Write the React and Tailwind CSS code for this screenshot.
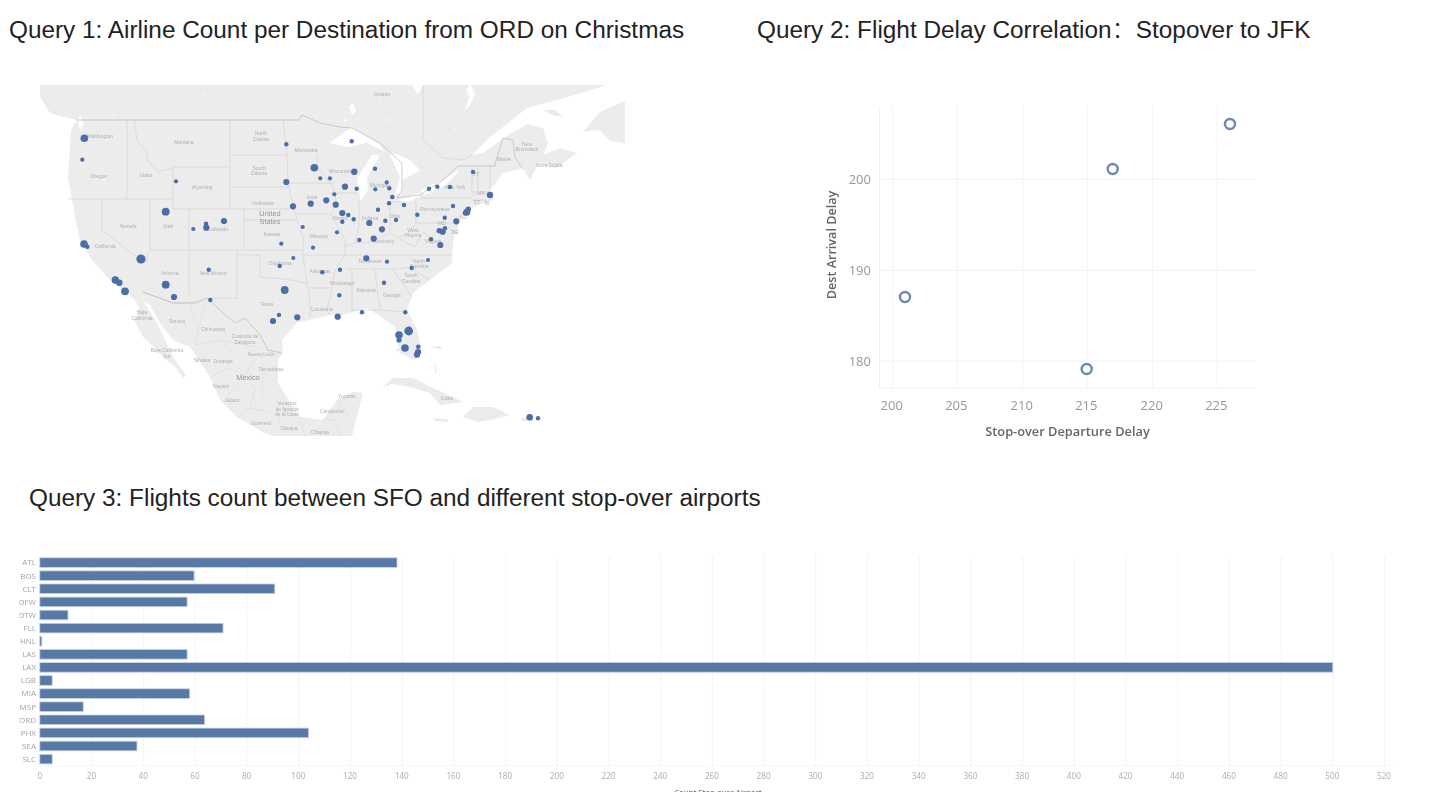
const FONT = { fontFamily: '"Liberation Sans", "Noto Sans CJK SC", sans-serif' };

const LAND = "M40,85 L40,97 L50,113 L60,116 L77,120 L71,130 L68,177 L72,200 L76,222 L80,240 L92,260 L110,280 L127,293 L135,300 L140,310 L134,320 L143,337 L153,346 L163,357 L176,368 L183,378 L186,375 L173,357 L165,340 L157,323 L149,310 L143,300 L150,305 L160,323 L173,340 L190,347 L200,362 L210,377 L220,400 L237,417 L263,432 L272,436 L352,436 L356,420 L363,393 L353,392 L337,400 L330,410 L323,420 L300,417 L290,402 L278,383 L278,360 L283,353 L282,340 L297,323 L317,318 L330,315 L343,315 L367,308 L383,318 L395,327 L400,353 L413,360 L422,353 L417,330 L407,310 L413,293 L430,280 L452,263 L453,243 L457,227 L463,213 L476,206 L493,200 L490,190 L503,173 L523,168 L530,180 L538,164 L556,168 L577,153 L560,148 L543,155 L548,143 L543,128 L528,124 L513,132 L497,143 L483,153 L472,155 L490,137 L503,127 L527,108 L557,100 L585,92 L607,85 L423,85 L418,95 L412,85 Z";
const NEWFOUNDLAND = "M583,132 L600,112 L622,102 L625,102 L625,143 L610,141 L600,130 Z";
const ISLANDS = [
  "M383,387 L393,378 L413,378 L433,388 L463,402 L440,405 L430,393 L410,387 L392,384 Z",
  "M433,418 L448,419 L448,422 L436,421 Z",
  "M463,417 L473,407 L493,407 L510,415 L490,420 L478,422 Z",
  "M521,418 L533,418 L533,421 L521,421 Z",
  "M543,110 L555,110 L564,117 L552,115 Z",
  "M395,350 L400,348 L399,352 Z",
  "M431,347 L440,346 L442,350 Z",
  "M434,362 L437,372 L435,373 Z",
];
const LAKES = [
  "M323,150 L330,143 L340,135 L352,127 L366,136 L380,145 L385,152 L367,143 L347,147 L330,143 Z",
  "M372,155 L380,155 L367,177 L368,190 L360,202 L357,190 L358,177 Z",
  "M390,155 L393,153 L410,160 L420,170 L403,180 L402,193 L395,195 L400,177 Z",
  "M397,200 L420,193 L420,198 L405,202 Z",
  "M420,190 L443,180 L455,172 L460,170 L446,185 L424,195 Z",
  "M349,106 L354,104 L356,112 L352,115 Z",
  "M466,90 L470,84 L474,92 L470,98 Z",
  "M470,95 L476,92 L470,105 L465,110 Z",
  "M80,115 L84,124 L80,130 L78,122 Z",
];
const BORDERS = [
  "M127,120 V199", "M68,199 H173", "M134,120 L137,140 L147,152 L147,160 L158,172 L173,168", "M173,167 H230", "M173,167 V209 H189",
  "M230,120 V209", "M230,155 H287", "M230,187 H288", "M189,209 H290", "M189,209 V295", "M244,209 V250", "M150,199 V250",
  "M102,199 V230 L140,260 L147,262 L147,255 L150,250", "M150,250 H303", "M244,220 H297", "M237,250 V298 H207", "M143,292 L173,303 L190,303 L207,298",
  "M260,255 V277 L285,279 L307,283", "M237,255 H260", "M283,120 L287,155 L288,180 L290,193 L297,220 L303,237 L303,255 L307,283 L308,288 L310,303 L310,317",
  "M288,183 H334", "M297,214 H331", "M303,255 H345", "M308,288 H332", "M332,288 L327,310 L330,315", "M317,155 L318,167 L333,187 L337,205 L331,214 L345,240 L345,255 L335,270 L332,288",
  "M330,193 H359", "M359,193 L359,225 L355,243 L345,246", "M390,202 V233", "M355,243 L372,242 L390,233 L398,238 L415,247", "M345,255 H452", "M345,269 H395",
  "M352,269 V312", "M375,270 L380,310 L405,312", "M352,310 H380", "M393,270 L410,267 L430,280", "M393,270 L412,297", "M390,202 H402", "M416,198 V223 H457", "M416,198 H472",
  "M472,167 V195", "M478,167 V192", "M490,165 V190", "M472,192 H490", "M472,200 H487", "M457,222 V234 L448,227", "M416,223 L410,232 L398,238", "M415,247 L423,232 L432,238 L438,228",
  "M423,85 V140 L443,158 L463,160", "M472,155 L463,160",
];
const HEAVY = [
  "M77,120 H299 L302,115 L320,123 L340,127 L352,128 L380,143 L402,163 L402,190 L397,198 L420,195 L443,180 L458,166 H495 L495,165 L497,157 L503,138 L513,140 L515,157 L523,169",
  "M143,292 L173,303 L190,303 L197,303 L207,298 L222,312 L235,323 L245,318 L260,335 L268,350 L282,353",
];
const MX = [
  "M190,304 L198,330 L195,345", "M207,298 L198,330", "M222,340 L245,345 L255,360 L245,375", "M195,345 L222,340 L232,355", "M245,345 L262,348", "M262,355 L263,372 L278,383",
  "M210,377 L228,368 L245,375", "M228,395 L245,375 L255,390 L250,408 L237,417", "M263,372 L262,395 L278,410 L280,425", "M250,408 L270,412", "M300,417 L305,436", "M323,420 L335,420 L340,436", "M337,400 L345,410 L350,420",
];
const FLECKS = [
  [170,215,3,2],[176,200,2,3],[240,130,3,1],[245,137,2,2],[113,115,1,4],[205,95,2,3],[250,100,2,2],[212,118,2,1],[104,180,2,2],[160,140,2,1],[400,125,3,2],[390,120,4,2],[440,120,2,3],[455,130,3,2],[380,100,2,2],[490,120,3,2],[345,120,4,3],[330,120,3,2],[172,325,2,2],[143,298,2,2],[285,330,2,1],[320,300,1,2],
];
const LABELS = [
  ["Washington",100,136],["Montana",184,142],["North",261,133],["Dakota",261,139],["South",259,168],["Dakota",259,173],["Minnesota",306,150],["Oregon",99,176],["Idaho",146,175],["Wyoming",202,187],["Nebraska",263,203],["Iowa",312,197],["Wisconsin",340,171],["Nevada",128,226],["Utah",168,226],["Colorado",218,229],["Kansas",272,234],["Missouri",319,236],["California",105,246],
  ["Ontario",382,94],["New",527,144],["Brunswick",527,149],["Maine",504,159],["Nova Scotia",549,165],["Michigan",380,185],["New York",455,187],["Pennsylvania",435,209],["Ohio",395,216],["Indiana",370,218],["Illinois",340,218],["West",413,230],["Virginia",413,235],["Virginia",433,241],["Kentucky",384,241],["MA",481,193],["CT",477,202],["RI",487,203],["NJ",463,217],["DE",455,232],["MD",442,223],["VT",476,174],
  ["Arizona",170,273],["New Mexico",213,273],["Oklahoma",280,263],["Arkansas",320,271],["Texas",267,304],["Louisiana",322,309],["Baja",142,312],["California",142,318],["Sonora",177,321],["Chihuahua",213,329],["Coahuila de",245,336],["Zaragoza",245,342],["Baja California",167,350],["Sur",167,356],["Nuevo León",261,354],["Sinaloa",202,360],["Durango",223,361],["Tamaulipas",271,369],["Nayarit",221,386],["Jalisco",232,400],["Veracruz",287,403],["de Ignacio",287,409],["de la Llave",287,414],["Guerrero",261,423],["Oaxaca",289,428],["Chiapas",320,432],["Campeche",332,411],
  ["Tennessee",370,261],["North",419,261],["Carolina",419,266],["South",411,275],["Carolina",411,281],["Mississippi",342,283],["Alabama",366,290],["Georgia",392,295],["Yucatán",347,396],["Cuba",447,398],
];
const BIG_LABELS = [["United",270,213],["States",270,221],["Mexico",248,377]];
const DOTS = [
  [84.3,138.3,3.8],[82.3,159.7,2.1],[286.3,144.3,2.2],[314.3,167.7,3.8],[320.3,178.3,2.1],[330,178.3,2.1],[286.3,182,3.1],[334.3,194.3,2.1],[176,181.3,2.1],[165.7,211.7,3.9],[293,206.3,3.1],[310.7,203.7,3.1],[326.3,200.3,3.1],[335.7,204.7,3.1],[224,221,3.1],[206,223.7,2.3],[206.3,227.7,3.1],[193.3,229,2.1],[302.7,227,2.1],[337,232.3,2.1],[281.3,243.7,2.1],[313,247.7,2.1],[84,244,3.8],[87.3,246.7,2.3],[141,259,4.6],[293.3,258,2.1],
  [351.7,141.3,2.2],[354.3,171.7,3.2],[375,168.7,2.2],[386.7,182.3,2.1],[389.3,188.3,2.2],[375.3,189.3,2.1],[356.7,188.7,2.2],[345,186.7,3.1],[392.3,197,2.3],[389,203.3,2.2],[404,205,2.2],[429,188.7,2.2],[437.3,186.7,2.2],[450,187,2.2],[473,172,2.2],[490,195,3.2],[453,206,2.2],[468.3,209.3,2.7],[466.7,212.3,3.5],[465,213.3,2.3],[417.3,214.7,2.2],[444.7,217.7,2.2],[456.3,221.3,3.1],[445,228.3,2.3],[442.7,231.7,3.1],[439.3,230.7,2.7],[431,239.3,2.2],[440.3,245,3.1],[342.3,213,3.1],[348.3,215,2.2],[353.7,219.3,2.2],[342.3,221.7,2.2],[369.3,223,3.1],[378,209.7,2.2],[385.3,220.7,2.2],[396,220,2.2],[382,229.3,3.1],[359.3,240,2.2],[373.7,238.7,3.1],[366.3,258.3,3.1],[428,260,2.1],
  [115.3,280,3.7],[119.3,282.7,3.2],[125,291.3,3.9],[165.7,284.7,3.9],[174,297,3.1],[208.7,269.7,2.2],[210.3,300,2.2],[279.7,266,2.2],[284.7,290,3.9],[322.3,272.3,2.2],[340,269.7,2.2],[279,315,2.2],[273,321,3.1],[297.3,317.3,3.1],[337.7,316.7,3.1],[339.3,295.3,2.2],
  [387,261.7,2.1],[411.7,268,2.2],[384,282.7,2.2],[362,312.3,2.2],[405.3,312.3,2.2],[408.7,331,4.4],[399,335,3.8],[399,340,2.6],[405,348,3.8],[418.3,346.7,2.3],[418,352,3.1],[417,354.7,3.1],[529.7,417.3,3.3],[538,418.3,2.2],
];

function UsMap() {
  return (
    <svg viewBox="40 85 585 351" className="block w-[585px] h-[351px] blur-[0.7px]" style={FONT}>
      <path d={LAND} fill="#ececec" />
      <path d={NEWFOUNDLAND} fill="#ececec" />
      {ISLANDS.map((d, i) => <path key={i} d={d} fill="#ebebeb" />)}
      {LAKES.map((d, i) => <path key={i} d={d} fill="#ffffff" />)}
      {FLECKS.map(([x, y, w, h], i) => <ellipse key={i} cx={x} cy={y} rx={w / 2} ry={h / 2} fill="#f8f8f8" />)}
      {MX.map((d, i) => <path key={i} d={d} fill="none" stroke="#dcdcdc" strokeWidth="0.6" />)}
      {BORDERS.map((d, i) => <path key={i} d={d} fill="none" stroke="#d4d4d4" strokeWidth="0.7" />)}
      {HEAVY.map((d, i) => <path key={i} d={d} fill="none" stroke="#c0c0c0" strokeWidth="0.8" />)}
      {LABELS.map(([t, x, y], i) => (
        <text key={i} x={x} y={y + 1.7} textAnchor="middle" fontSize="5" fill="#b0b0b0">{t}</text>
      ))}
      {BIG_LABELS.map(([t, x, y], i) => (
        <text key={i} x={x} y={y + 2.6} textAnchor="middle" fontSize="7.4" fill="#949494">{t}</text>
      ))}
      {DOTS.map(([x, y, r], i) => <circle key={i} cx={x} cy={y} r={r} fill="#4a6ea6" />)}
    </svg>
  );
}

const XT = [[892.7,200],[957.3,205],[1022.7,210],[1087.3,215],[1152.7,220],[1217.3,225]];
const YT = [[179.3,200],[270.3,190],[361,180]];
const PTS = [[1230,124],[1112.7,169],[905,297],[1086.7,369]];

function Scatter() {
  return (
    <svg viewBox="810 90 460 360" className="block w-[460px] h-[360px] blur-[0.4px]" style={{ fontFamily: '"Open Sans", sans-serif' }}>
      <path d="M879.5,106 V388 H1256" fill="none" stroke="#f0f0f0" />
      {XT.map(([x]) => <line key={x} x1={x} x2={x} y1="106" y2="388" stroke="#f4f4f4" />)}
      {YT.map(([y]) => <line key={y} x1="880" x2="1256" y1={y} y2={y} stroke="#f1f1f1" />)}
      {XT.map(([x, t]) => <text key={t} x={x - 1} y="410" textAnchor="middle" fontSize="13" fill="#979797">{t}</text>)}
      {YT.map(([y, t]) => <text key={t} x="871" y={y + 5} textAnchor="end" fontSize="13" fill="#979797">{t}</text>)}
      <text x="1067.5" y="436" textAnchor="middle" fontSize="12.8" fontWeight="600" fill="#666666">Stop-over Departure Delay</text>
      <text transform="translate(836,245) rotate(-90)" textAnchor="middle" fontSize="12.6" fontWeight="600" fill="#666666">Dest Arrival Delay</text>
      {PTS.map(([x, y]) => <circle key={x} cx={x} cy={y} r="5" fill="none" stroke="#6d88b3" strokeWidth="2.4" />)}
    </svg>
  );
}

const BARS = [["ATL",138],["BOS",59.5],["CLT",90.7],["DFW",56.8],["DTW",10.7],["FLL",70.7],["HNL",0.6],["LAS",56.8],["LAX",500],["LGB",4.6],["MIA",57.8],["MSP",16.6],["ORD",63.6],["PHX",103.8],["SEA",37.4],["SLC",4.6]];
const TICKS = Array.from({ length: 27 }, (_, i) => i * 20);
const X0 = 40.3;
const K = 2.585;

function Bars() {
  return (
    <svg viewBox="0 545 1438 259" className="block w-[1438px] h-[259px] blur-[0.45px]" style={{ fontFamily: '"Open Sans", sans-serif' }}>
      <defs>
        <clipPath id="lbl"><rect x="19.5" y="550" width="20" height="220" /></clipPath>
        <clipPath id="ttl"><rect x="600" y="780" width="240" height="12" /></clipPath>
      </defs>
      {TICKS.map((t) => <line key={t} x1={X0 + t * K} x2={X0 + t * K} y1="556" y2="766" stroke="#f4f4f4" />)}
      <line x1="39" x2="1397" y1="766" y2="766" stroke="#f6f6f6" />
      {BARS.map(([n, v], i) => {
        const y = 557.8 + i * 13.1;
        return (
          <g key={n}>
            <rect x="39.8" y={y} width={X0 + v * K - 39.8} height="9.6" fill="#5878a6" stroke="#c6d3e6" strokeWidth="0.8" />
            <g clipPath="url(#lbl)">
              <text x="36" y={y + 7.6} textAnchor="end" fontSize="8" fill="#a3a3a3">{n}</text>
            </g>
          </g>
        );
      })}
      {TICKS.map((t) => <text key={t} x={X0 + t * K - 0.5} y="778.5" textAnchor="middle" fontSize="8.2" fill="#adadad">{t}</text>)}
      <g clipPath="url(#ttl)">
        <text x="718" y="795" textAnchor="middle" fontSize="7.6" fontWeight="600" fill="#777777">Count Stop-over Airport</text>
      </g>
    </svg>
  );
}

export default function App() {
  return (
    <div className="w-[1438px] h-[804px] overflow-hidden bg-white text-[#222222]" style={FONT}>
      <div className="flex h-[460px]">
        <section className="w-[748px] shrink-0">
          <h2 className="pl-[9px] pt-[16px] h-[85px] text-[24.35px] leading-[28px] font-normal whitespace-nowrap">Query 1: Airline Count per Destination from ORD on Christmas</h2>
          <div className="pl-[40px]"><UsMap /></div>
        </section>
        <section className="flex-1">
          <h2 className="pl-[9px] pt-[16px] h-[90px] text-[24.35px] leading-[28px] font-normal whitespace-nowrap">Query 2: Flight Delay Correlation<span className="font-light">：</span>Stopover to JFK</h2>
          <div className="pl-[62px]"><Scatter /></div>
        </section>
      </div>
      <h2 className="pl-[29px] pt-[24px] h-[85px] text-[24.35px] leading-[28px] font-normal whitespace-nowrap">Query 3: Flights count between SFO and different stop-over airports</h2>
      <Bars />
    </div>
  );
}
